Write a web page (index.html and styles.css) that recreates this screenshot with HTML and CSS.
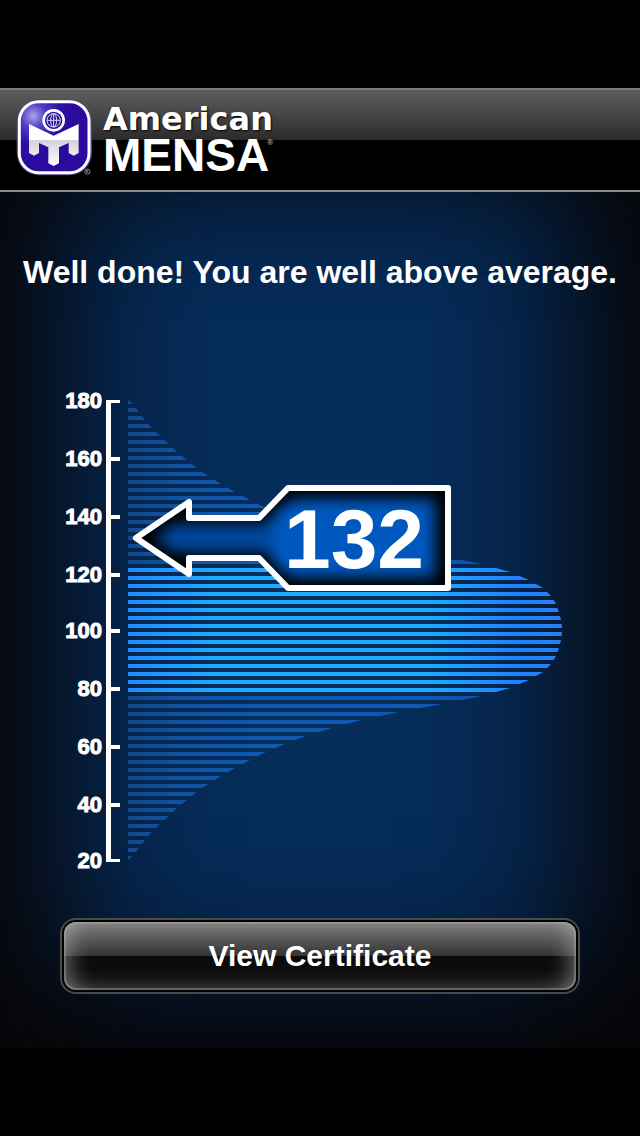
FILE: index.html
```html
<!DOCTYPE html>
<html lang="en">
<head>
    <meta charset="UTF-8">
    <meta name="viewport" content="width=device-width, initial-scale=1.0">
    <title>American Mensa</title>
    <link rel="stylesheet" href="styles.css">
</head>
<body>
    <header class="top-bar">
        <svg class="logo" viewBox="15 15 240 240" xmlns="http://www.w3.org/2000/svg" role="img" aria-label="Mensa">
            <defs>
                <radialGradient id="badge" cx="0.2" cy="0.2" r="0.6">
                    <stop offset="0" stop-color="#a9a4ea" />
                    <stop offset="0.3" stop-color="#4f3cc4" />
                    <stop offset="0.65" stop-color="#2d10a6" />
                    <stop offset="1" stop-color="#2a0b9e" />
                </radialGradient>
                <linearGradient id="letter" x1="0" y1="0" x2="0" y2="1">
                    <stop offset="0" stop-color="#fff" />
                    <stop offset="0.38" stop-color="#fff" />
                    <stop offset="0.39" stop-color="#d2d2da" />
                    <stop offset="1" stop-color="#fff" />
                </linearGradient>
            </defs>
            <rect x="20" y="22" width="226" height="228" rx="68" fill="#4a4586" />
            <rect x="28" y="29" width="209" height="213" rx="58" fill="url(#badge)" stroke="#fff" stroke-width="9" />
            <path d="M57 96 L131 131 L206 96 V183 L191 191 L176 183 V153 L147 166 V214 L131 222 L115 214 V166 L87 153 V183 L72 191 L57 183 Z" fill="url(#letter)" />
            <circle cx="131" cy="85" r="34" fill="#fff" />
            <circle cx="131" cy="85" r="26" fill="#2d10a6" />
            <g fill="none" stroke="#d8d8f4" stroke-width="3">
                <circle cx="131" cy="85" r="20" />
                <ellipse cx="131" cy="85" rx="9" ry="20" />
                <path d="M131 65 V105 M111 85 H151" />
            </g>
            <g class="reg-mark">
                <circle cx="232" cy="239" r="8" />
                <path d="M229 244 V234 H233 Q236 237 232 239 H229 M232 239 L236 244" />
            </g>
        </svg>
        <h1 class="brand">
            <span class="brand-small">American</span>
            <span class="brand-big">MENSA<sup>®</sup></span>
        </h1>
    </header>

    <main class="result">
        <h2 class="message">Well done! You are well above average.</h2>

        <svg class="chart" viewBox="0 380 640 500" xmlns="http://www.w3.org/2000/svg">
            <defs>
                <pattern id="lines" width="8" height="8" patternUnits="userSpaceOnUse">
                    <rect width="8" height="4" fill="#fff" />
                </pattern>
                <mask id="stripes" maskUnits="userSpaceOnUse" x="120" y="400" width="450" height="460">
                    <rect x="120" y="400" width="450" height="460" fill="url(#lines)" />
                </mask>
                <clipPath id="bell">
                    <path d="M128 400 L133 404 L139 412 L145 420 L152 428 L160 436 L169 444 L177 452 L187 460 L197 468 L208 476 L221 484 L235 492 L250 500 L266 508 L285 516 L306 524 L332 532 L362 540 L399 548 L442 556 L482 564 L510 572 L529 580 L543 588 L551 596 L556 604 L559 612 L561 620 L562 628 V632 L561 640 L559 648 L556 656 L551 664 L543 672 L529 680 L510 688 L482 696 L442 704 L399 712 L362 720 L332 728 L306 736 L285 744 L266 752 L250 760 L235 768 L221 776 L208 784 L197 792 L187 800 L177 808 L169 816 L160 824 L152 832 L145 840 L139 848 L133 856 L128 860 Z" />
                </clipPath>
                <linearGradient id="outer" gradientUnits="userSpaceOnUse" x1="128" y1="0" x2="562" y2="0">
                    <stop offset="0" stop-color="#124a90" />
                    <stop offset="0.25" stop-color="#0e58b2" />
                    <stop offset="0.7" stop-color="#1058b4" />
                    <stop offset="1" stop-color="#0d478f" />
                </linearGradient>
                <linearGradient id="inner" gradientUnits="userSpaceOnUse" x1="128" y1="0" x2="562" y2="0">
                    <stop offset="0" stop-color="#1f8cff" />
                    <stop offset="0.2" stop-color="#1eaaff" />
                    <stop offset="0.7" stop-color="#1eaaff" />
                    <stop offset="0.9" stop-color="#1f80ff" />
                    <stop offset="1" stop-color="#2a7ff0" />
                </linearGradient>
                <path id="arrow" d="M136 538 L189 502 V518 H259 L288 488 H448 V588 H288 L259 558 H189 V574 Z" />
                <clipPath id="arrow-clip">
                    <use href="#arrow" />
                </clipPath>
                <filter id="glow" x="-20%" y="-40%" width="140%" height="180%">
                    <feGaussianBlur stdDeviation="7" />
                </filter>
            </defs>

            <!-- distribution curve -->
            <g clip-path="url(#bell)">
                <g mask="url(#stripes)">
                    <rect x="128" y="400" width="434" height="460" fill="url(#outer)" />
                    <rect x="128" y="566" width="434" height="128" fill="url(#inner)" />
                </g>
            </g>

            <!-- axis -->
            <path class="axis" d="M106 400 H120 V403 H111 V457 H120 V461 H111 V515 H120 V519 H111 V573 H120 V577 H111 V629 H120 V633 H111 V687 H120 V691 H111 V745 H120 V749 H111 V803 H120 V807 H111 V859 H120 V862 H106 Z" />
            <g class="axis-labels">
                <text x="102" y="408">180</text>
                <text x="102" y="466">160</text>
                <text x="102" y="524">140</text>
                <text x="102" y="582">120</text>
                <text x="102" y="638">100</text>
                <text x="102" y="696">80</text>
                <text x="102" y="754">60</text>
                <text x="102" y="812">40</text>
                <text x="102" y="868">20</text>
            </g>

            <!-- score marker -->
            <use href="#arrow" fill="#000" />
            <g clip-path="url(#arrow-clip)">
                <g filter="url(#glow)">
                    <path d="M154 538 L174 524 H264 L294 498 H436 V578 H294 L264 552 H174 Z" fill="#00479c" />
                    <rect x="274" y="504" width="156" height="70" rx="16" fill="#0058bf" />
                </g>
            </g>
            <use href="#arrow" class="arrow-outline" />
            <text class="score" x="354" y="568">132</text>
        </svg>

        <button type="button" class="certificate">View Certificate</button>
    </main>
</body>
</html>
```
FILE: styles.css
```css
* {
    box-sizing: border-box;
}
body {
    margin: 0;
    padding: 88px 0;
    background: #000;
    color: #fff;
    font-family: "Liberation Sans", Arial, sans-serif;
}
.top-bar {
    display: flex;
    align-items: flex-start;
    gap: 8px;
    height: 104px;
    padding: 7px 15px;
    border-top: 2px solid #7c7c7c;
    border-bottom: 2px solid #8a8a8a;
    background: linear-gradient(#5e5e5e, #2b2b2b 50px, #000 50px);
}
.logo {
    width: 80px;
    height: 80px;
}
.reg-mark {
    fill: none;
    stroke: #aaa;
    stroke-width: 2;
}
.brand {
    display: flex;
    flex-direction: column;
    margin: 0;
    padding-top: 4px;
    font-weight: bold;
    text-shadow: 1px 1px 2px #000;
}
.brand-small {
    font-family: "DejaVu Sans", Verdana, sans-serif;
    font-size: 32px;
    line-height: 36px;
}
.brand-big {
    font-size: 46px;
    line-height: 36px;
}
.brand sup {
    font-size: 8px;
    line-height: 0;
    vertical-align: 26px;
    margin-left: -2px;
    font-weight: normal;
    color: #ccc;
}
.result {
    display: flex;
    flex-direction: column;
    align-items: center;
    padding: 60px 0 58px;
    background: #062c59;
    box-shadow: inset 115px 0 150px -50px #080608,
        inset -115px 0 150px -50px #080608,
        inset 0 -115px 140px -50px #080608;
}
.message {
    margin: 0;
    font-size: 32px;
    line-height: 40px;
    text-align: center;
}
.chart {
    display: block;
    width: 100%;
    margin: 88px 0 42px;
}
.axis {
    fill: #fff;
}
.axis-labels {
    fill: #fff;
    stroke: #fff;
    stroke-width: 1px;
    font-size: 22px;
    font-weight: bold;
    text-anchor: end;
}
.arrow-outline {
    fill: none;
    stroke: #fff;
    stroke-width: 6px;
    stroke-linejoin: round;
}
.score {
    fill: #fff;
    font-size: 84px;
    font-weight: bold;
    text-anchor: middle;
}
.certificate {
    width: 80%;
    height: 68px;
    border: 0;
    border-radius: 12px;
    background: linear-gradient(#7e7e7e, #333 50%, #0a0a0a 50%, #0c0c0c 70%, #262626);
    box-shadow: 0 0 0 2px #000, 0 0 0 4px #484b49,
        inset 0 0 0 2px rgba(170, 170, 170, 0.4),
        inset 18px 0 20px -10px rgba(190, 190, 190, 0.45),
        inset -18px 0 20px -10px rgba(190, 190, 190, 0.45);
    color: #fff;
    font-family: inherit;
    font-size: 30px;
    font-weight: bold;
    cursor: pointer;
}
```
